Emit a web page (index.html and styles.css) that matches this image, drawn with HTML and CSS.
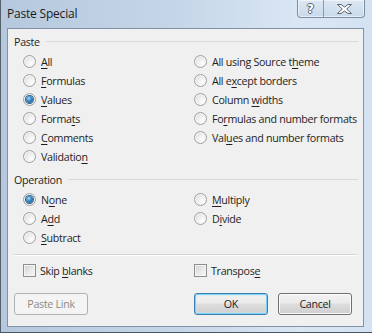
FILE: index.html
```html
<!DOCTYPE html>
<html lang="en">
<head>
    <meta charset="UTF-8">
    <title>Paste Special</title>
    <link rel="stylesheet" href="styles.css">
</head>
<body>
    <div class="window">
        <div class="titlebar">
            <span class="title">Paste Special</span>
            <div class="caption_buttons">
                <span class="cap cap_help">?</span>
                <span class="cap cap_close">
                    <svg width="15" height="10" viewBox="0 0 15 10">
                        <polygon points="0.5,0.5 4,0.5 7.5,3 11,0.5 14.5,0.5 9.7,5 14.5,9.5 11,9.5 7.5,7 4,9.5 0.5,9.5 5.3,5" fill="#fff" stroke="#5b6470" stroke-width="1" stroke-linejoin="round"/>
                    </svg>
                </span>
            </div>
        </div>

        <div class="client">
            <!-- Paste -->
            <div class="group_head"><span>Paste</span></div>
            <div class="options options_paste">
                <label class="opt"><span class="radio"></span><span class="txt"><u>A</u>ll</span></label>
                <label class="opt"><span class="radio"></span><span class="txt"><u>F</u>ormulas</span></label>
                <label class="opt"><span class="radio checked"></span><span class="txt"><u>V</u>alues</span></label>
                <label class="opt"><span class="radio"></span><span class="txt">Forma<u>t</u>s</span></label>
                <label class="opt"><span class="radio"></span><span class="txt"><u>C</u>omments</span></label>
                <label class="opt"><span class="radio"></span><span class="txt">Validatio<u>n</u></span></label>
                <label class="opt"><span class="radio"></span><span class="txt">All using Source t<u>h</u>eme</span></label>
                <label class="opt"><span class="radio"></span><span class="txt">All e<u>x</u>cept borders</span></label>
                <label class="opt"><span class="radio"></span><span class="txt">Column <u>w</u>idths</span></label>
                <label class="opt"><span class="radio"></span><span class="txt">Fo<u>r</u>mulas and number formats</span></label>
                <label class="opt"><span class="radio"></span><span class="txt">Val<u>u</u>es and number formats</span></label>
            </div>

            <!-- Operation -->
            <div class="group_head head_operation"><span>Operation</span></div>
            <div class="options options_op">
                <label class="opt"><span class="radio checked"></span><span class="txt">N<u>o</u>ne</span></label>
                <label class="opt"><span class="radio"></span><span class="txt">A<u>d</u>d</span></label>
                <label class="opt"><span class="radio"></span><span class="txt"><u>S</u>ubtract</span></label>
                <label class="opt"><span class="radio"></span><span class="txt"><u>M</u>ultiply</span></label>
                <label class="opt"><span class="radio"></span><span class="txt">D<u>i</u>vide</span></label>
            </div>

            <div class="sep"></div>

            <div class="options options_checks">
                <label class="opt"><span class="check"></span><span class="txt">Skip <u>b</u>lanks</span></label>
                <label class="opt"><span class="check"></span><span class="txt">Transpos<u>e</u></span></label>
            </div>

            <div class="button_row">
                <span class="btn btn_disabled">Paste Link</span>
                <span class="spacer"></span>
                <span class="btn btn_default">OK</span>
                <span class="btn">Cancel</span>
            </div>
        </div>
    </div>
</body>
</html>
```

FILE: styles.css
```css
html, body {
    margin: 0;
    padding: 0;
    background-color: #c8d9ec;
}

.window {
    width: 372px;
    height: 333px;
    box-sizing: border-box;
    border-left: 1px solid #55606c;
    border-bottom: 1px solid #4a5560;
    padding: 0 8px 5px 6px;
    background: linear-gradient(to right, #b6c8dd 0%, #c4d5e8 45%, #d9e6f4 80%, #d3e2f2 100%);
    font-family: "Open Sans", sans-serif;
    color: #1e1e1e;
    display: flex;
    flex-direction: column;
}

.titlebar {
    height: 28px;
    display: flex;
    justify-content: space-between;
    align-items: flex-start;
}

.title {
    font-size: 12px;
    letter-spacing: -0.2px;
    margin-top: 5px;
    color: #1b1b1b;
}

.caption_buttons {
    display: flex;
    height: 17px;
    margin-right: -1px;
    border: 1px solid #7d8ea3;
    border-top: none;
    border-radius: 0 0 4px 4px;
    background: linear-gradient(#dce7f3, #cad9ea);
    box-shadow: inset 0 0 0 1px rgba(255, 255, 255, 0.5);
}

.cap {
    display: flex;
    align-items: center;
    justify-content: center;
}

.cap_help {
    width: 25px;
    border-right: 1px solid #8b9bae;
    font-family: "DejaVu Sans", sans-serif;
    font-weight: bold;
    font-size: 12px;
    color: #fff;
    text-shadow: 1px 0 #5b6470, -1px 0 #5b6470, 0 1px #5b6470, 0 -1px #5b6470;
}

.cap_close {
    width: 40px;
}

.client {
    flex: 1;
    background-color: #f0f0f0;
    border: 1px solid #8293a8;
    font-size: 10.7px;
    letter-spacing: -0.3px;
    padding: 0 6px 0 6px;
    display: flex;
    flex-direction: column;
}

.group_head {
    display: flex;
    align-items: center;
    height: 15px;
    margin-top: 5px;
    margin-right: -1px;
}

.group_head::after {
    content: "";
    flex: 1;
    margin-left: 6px;
    border-top: 1px solid #dadada;
}

.head_operation {
    margin-top: 6px;
}

.options {
    display: grid;
    grid-auto-flow: column;
    grid-template-columns: 171px 1fr;
    padding-left: 9px;
    margin-top: 3px;
}

.options_paste {
    grid-template-rows: repeat(6, 19px);
}

.options_op {
    grid-template-rows: repeat(3, 19px);
}

.options_checks {
    grid-template-rows: 19px;
    margin-top: 5px;
}

.opt {
    display: flex;
    align-items: center;
}

.txt {
    white-space: nowrap;
}

.txt u {
    text-decoration-thickness: 1px;
    text-underline-offset: 2px;
}

.radio {
    flex: none;
    width: 13px;
    height: 13px;
    box-sizing: border-box;
    border-radius: 50%;
    border: 1px solid #a0a0a0;
    background: radial-gradient(circle at 70% 70%, #ffffff 0%, #f0f0f0 40%, #d6d6d6 100%);
    box-shadow: inset 0 0 0 1px #f6f6f6;
    margin-right: 5px;
    display: flex;
    align-items: center;
    justify-content: center;
}

.radio.checked::after {
    content: "";
    width: 7px;
    height: 7px;
    border-radius: 50%;
    background: radial-gradient(circle at 40% 35%, #b3dcf7 0%, #3b8bc6 40%, #1a4f7c 100%);
    box-shadow: 0 0 0 1px #2d5f8a;
}

.check {
    flex: none;
    width: 13px;
    height: 13px;
    box-sizing: border-box;
    border: 1px solid #8e8f8f;
    background: linear-gradient(135deg, #cfcfcf 0%, #eaeaea 55%, #f7f7f7 100%);
    box-shadow: inset 0 0 0 1px #f4f4f4;
    margin-right: 4px;
}

.sep {
    margin-top: 7px;
    height: 1px;
    border-top: 1px solid #d5d5d5;
    background-color: #fff;
}

.button_row {
    display: flex;
    margin-top: 13px;
    margin-right: 5px;
}

.spacer {
    flex: 1;
}

.btn {
    width: 74px;
    height: 22px;
    box-sizing: border-box;
    margin-left: 10px;
    border: 1px solid #707070;
    border-radius: 3px;
    background: linear-gradient(#f2f2f2 0%, #ebebeb 45%, #dddddd 50%, #cfcfcf 100%);
    box-shadow: inset 0 0 0 1px #fbfbfb;
    display: flex;
    align-items: center;
    justify-content: center;
}

.btn_default {
    border-color: #3c7fb1;
    box-shadow: inset 0 0 0 1px #7fd2f7, inset 0 0 2px 1px #bfe7fa;
}

.btn_disabled {
    margin-left: 0;
    border-color: #adb2b5;
    background: #f4f4f4;
    box-shadow: none;
    color: #8a8a8a;
}
```
